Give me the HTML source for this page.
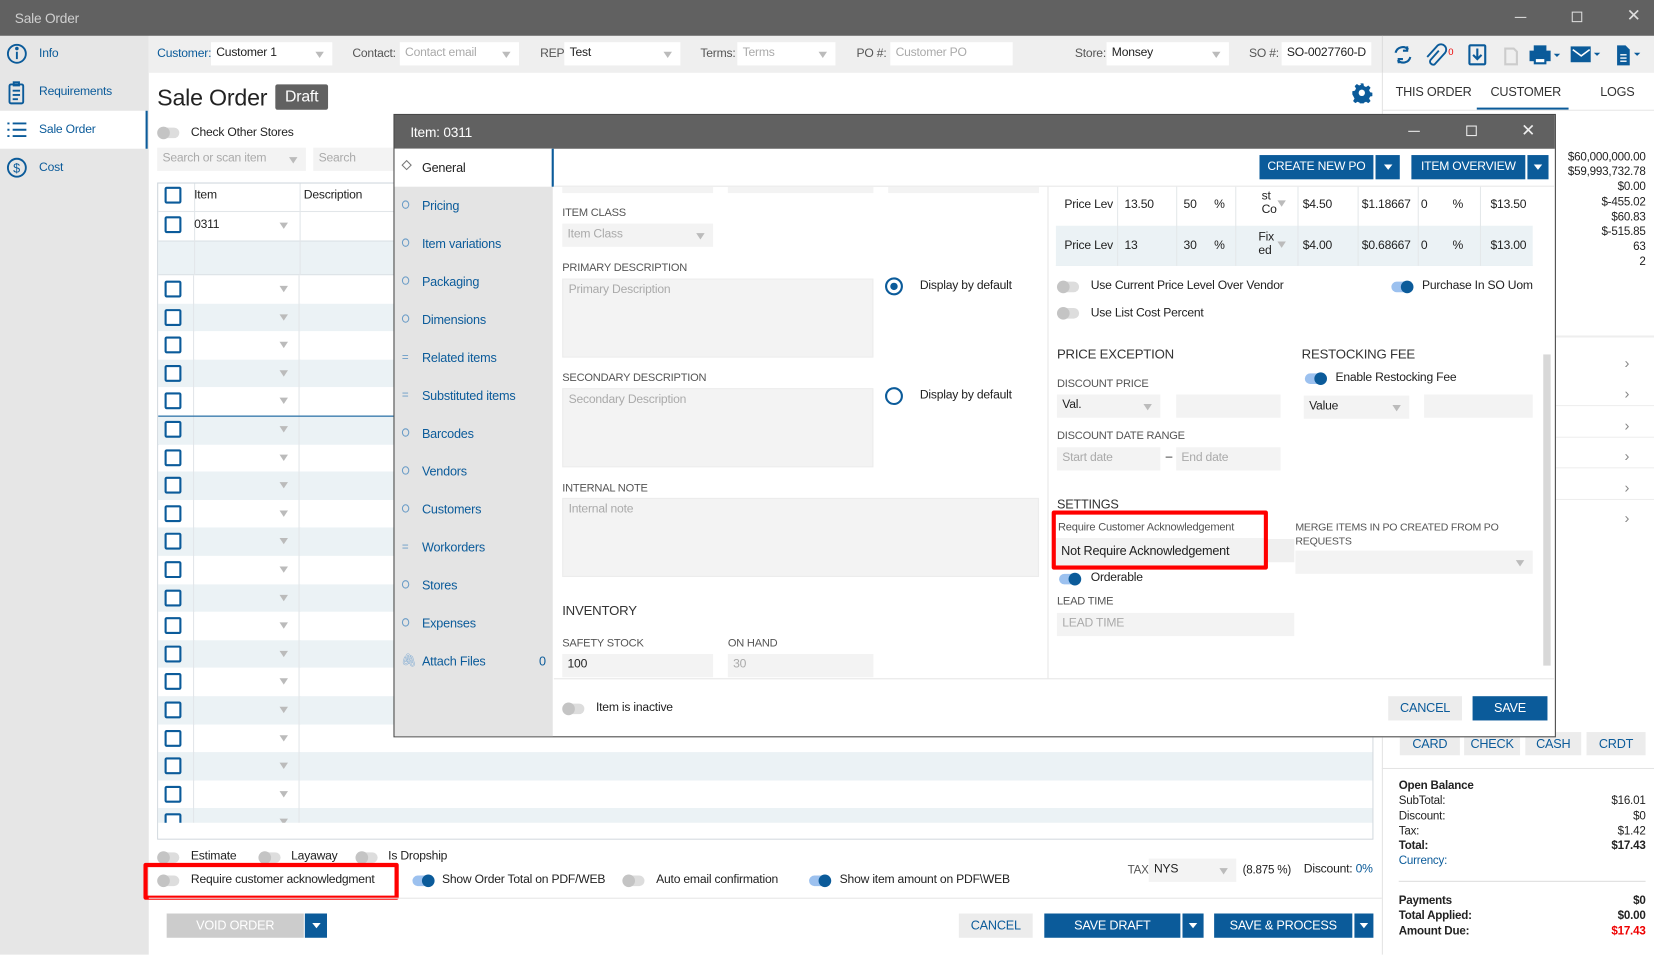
<!DOCTYPE html>
<html><head><meta charset="utf-8"><style>
*{box-sizing:border-box;margin:0;padding:0}
html,body{width:1654px;height:955px;overflow:hidden;background:#fff}
#s{position:absolute;left:0;top:0;width:1568px;height:905px;transform:scale(1.05485);transform-origin:0 0;font-family:"Liberation Sans",sans-serif;font-size:11.5px;color:#222;letter-spacing:-0.2px}
.a{position:absolute;white-space:nowrap}
.blue{color:#0b5b9a}
.inp{position:absolute;background:#fff;height:22px;padding:4px 5px;color:#222}
.g{background:#f3f3f3}
.ph{color:#aaa}
.dd::after{content:"";position:absolute;right:8px;top:9px;border:4px solid transparent;border-top:6px solid #bbb}
.tg{position:absolute;width:20px;height:10px;border-radius:5px;background:#ddd}
.tg::after{content:"";position:absolute;left:-1px;top:-1px;width:12px;height:12px;border-radius:6px;background:#c4c4c4}
.tg.on{background:#9cc1ef}.tg.on::after{left:9px;background:#0b5b9a}
.cb{position:absolute;width:16px;height:16px;border:2px solid #0b5b9a;border-radius:2px;background:#fff}
.lbl{position:absolute;font-size:10.5px;color:#555;white-space:nowrap}
.btn{position:absolute;background:#0b5b9a;color:#fff;text-align:center;font-size:12px;height:23px;line-height:23px}
.btn2{position:absolute;background:#ececec;color:#0b5b9a;text-align:center;font-size:12px;height:23px;line-height:23px}
.ddb{position:absolute;background:#0b5b9a;height:23px}
.ddb::after{content:"";position:absolute;left:50%;top:9px;margin-left:-4px;border:4px solid transparent;border-top:5px solid #fff}
.nav{position:absolute;left:400px;color:#0b5b9a;font-size:12px}
.nic{position:absolute;left:381px;width:7px;height:8px;border:1.5px solid #6a9cc7;border-radius:50%}
</style></head><body><div id="s">
<!-- title bar -->
<div class="a" style="left:0;top:0;width:1568px;height:34px;background:#616161"></div>
<div class="a" style="left:14px;top:10px;color:#cfcfcf;font-size:13px">Sale Order</div>
<div class="a" style="left:1436px;top:16px;width:11px;height:1px;background:#ddd"></div>
<div class="a" style="left:1490px;top:11px;width:10px;height:10px;border:1px solid #ddd"></div>
<div class="a" style="left:1542px;top:5px;color:#ddd;font-size:16px">✕</div>
<!-- sidebar -->
<div class="a" style="left:0;top:34px;width:141px;height:871px;background:#e6e6e6"></div>
<div class="a" style="left:0;top:105px;width:140px;height:36px;background:#fff;border-right:2px solid #0b5b9a"></div>
<svg class="a" style="left:5px;top:40px" width="22" height="140" viewBox="0 0 22 140" fill="none" stroke="#0b5b9a" stroke-width="1.8">
<circle cx="11" cy="11" r="8.5"/><line x1="11" y1="9" x2="11" y2="16"/><circle cx="11" cy="6" r=".8" fill="#0b5b9a"/>
<rect x="4" y="40" width="13" height="18" rx="1.5"/><rect x="8" y="38" width="5" height="3"/><line x1="7" y1="46" x2="14" y2="46"/><line x1="7" y1="50" x2="14" y2="50"/><line x1="7" y1="54" x2="12" y2="54"/>
<line x1="2" y1="77" x2="4" y2="77"/><line x1="7" y1="77" x2="20" y2="77"/><line x1="2" y1="83" x2="4" y2="83"/><line x1="7" y1="83" x2="20" y2="83"/><line x1="2" y1="89" x2="4" y2="89"/><line x1="7" y1="89" x2="20" y2="89"/>
<circle cx="11" cy="119" r="8.5"/><text x="7.5" y="123.5" font-size="12" fill="#0b5b9a" stroke="none" font-family="Liberation Sans">$</text>
</svg>
<div class="a blue" style="left:37px;top:45px">Info</div>
<div class="a blue" style="left:37px;top:81px">Requirements</div>
<div class="a blue" style="left:37px;top:117px">Sale Order</div>
<div class="a blue" style="left:37px;top:153px">Cost</div>
<!-- top bar -->
<div class="a" style="left:141px;top:34px;width:1427px;height:35px;background:#efefef"></div>
<div class="a blue" style="left:149px;top:45px">Customer:</div><div class="inp dd" style="left:200px;top:40px;width:115px">Customer 1</div>
<div class="a" style="left:334px;top:45px;color:#555">Contact:</div><div class="inp dd ph" style="left:379px;top:40px;width:113px">Contact email</div>
<div class="a" style="left:512px;top:45px;color:#555">REP:</div><div class="inp dd" style="left:535px;top:40px;width:110px">Test</div>
<div class="a" style="left:664px;top:45px;color:#555">Terms:</div><div class="inp dd ph" style="left:699px;top:40px;width:93px">Terms</div>
<div class="a" style="left:812px;top:45px;color:#555">PO #:</div><div class="inp ph" style="left:844px;top:40px;width:116px">Customer PO</div>
<div class="a" style="left:1019px;top:45px;color:#555">Store:</div><div class="inp dd" style="left:1049px;top:40px;width:116px">Monsey</div>
<div class="a" style="left:1184px;top:45px;color:#555">SO #:</div><div class="inp" style="left:1215px;top:40px;width:85px">SO-0027760-D</div>
<div class="a" style="left:1310px;top:34px;width:1px;height:35px;background:#ddd"></div>
<svg class="a" style="left:1318px;top:40px" width="250" height="24" viewBox="0 0 250 24" fill="none" stroke="#0b5b9a" stroke-width="2">
<path d="M5 10a7 7 0 0 1 12-3M19 14a7 7 0 0 1-12 3"/><path d="M16 4v4h-4M8 20v-4h4"/>
<path d="M46 8l-8 9a3 3 0 0 0 4 4l10-11a5 5 0 0 0-7-7L35 14" stroke-width="1.8"/>
<text x="55" y="12" font-size="9" fill="#e00" stroke="none" font-family="Liberation Sans">0</text>
<rect x="75" y="3" width="15" height="18" rx="1"/><path d="M82.5 6v10M78.5 12l4 4 4-4"/>
<path d="M109 6h8l3 3v12h-11z" stroke="#ccc"/>
<rect x="133" y="9" width="18" height="8" fill="#0b5b9a"/><rect x="137" y="4" width="10" height="5" fill="#0b5b9a"/><rect x="137" y="15" width="10" height="5" fill="#fff"/>
<path d="M155 11l3 3 3-3" fill="#0b5b9a" stroke="none"/>
<rect x="172" y="5" width="17" height="13" fill="#0b5b9a"/><path d="M173 7l8 6 8-6" stroke="#fff" stroke-width="1.5"/><path d="M193 10l6 0-3 3z" fill="#0b5b9a" stroke="none"/>
<path d="M215 3h8l4 4v15h-12z" fill="#0b5b9a" stroke="none"/><path d="M218 12h6M218 15h6M218 18h6" stroke="#fff" stroke-width="1.3"/><path d="M231 10l6 0-3 3z" fill="#0b5b9a" stroke="none"/>
</svg>
<!-- right panel tabs -->
<div class="a" style="left:1310px;top:69px;width:1px;height:836px;background:#e4e4e4"></div>
<div class="a" style="left:1323px;top:80px;font-size:12px;color:#333">THIS ORDER</div>
<div class="a" style="left:1413px;top:80px;font-size:12px;color:#333">CUSTOMER</div>
<div class="a" style="left:1400px;top:102px;width:87px;height:2px;background:#0b5b9a"></div>
<div class="a" style="left:1517px;top:80px;font-size:12px;color:#333">LOGS</div>
<div class="a" style="left:1310px;top:104px;width:258px;height:1px;background:#e6e6e6"></div>
<div class="a" style="left:1440px;top:142px;width:120px;text-align:right;font-size:11px;line-height:14.2px;white-space:normal">$60,000,000.00<br>$59,993,732.78<br>$0.00<br>$-455.02<br>$60.83<br>$-515.85<br>63<br>2</div>
<div class="a" style="left:1475px;top:318px;width:93px;height:2px;background:#eee"></div>
<div class="a" style="left:1540px;top:330px;color:#888;font-size:14px;line-height:29.4px;white-space:normal">›<br>›<br>›<br>›<br>›<br>›</div>
<div class="a" style="left:1475px;top:384px;width:93px;height:1px;background:#eee"></div>
<div class="a" style="left:1475px;top:414px;width:93px;height:1px;background:#eee"></div>
<div class="a" style="left:1475px;top:443px;width:93px;height:1px;background:#eee"></div>
<div class="a" style="left:1475px;top:473px;width:93px;height:1px;background:#eee"></div>
<div class="btn2" style="left:1327px;top:694px;width:57px;height:22px;line-height:22px">CARD</div>
<div class="btn2" style="left:1388px;top:694px;width:53px;height:22px;line-height:22px">CHECK</div>
<div class="btn2" style="left:1446px;top:694px;width:53px;height:22px;line-height:22px">CASH</div>
<div class="btn2" style="left:1504px;top:694px;width:56px;height:22px;line-height:22px">CRDT</div>
<div class="a" style="left:1310px;top:728px;width:258px;height:1px;background:#e4e4e4"></div>
<div class="a" style="left:1326px;top:738px;width:234px;font-size:11px;line-height:14.3px;white-space:normal">
<div style="font-weight:bold">Open Balance</div>
<div>SubTotal:<span style="float:right">$16.01</span></div>
<div>Discount:<span style="float:right">$0</span></div>
<div>Tax:<span style="float:right">$1.42</span></div>
<div style="font-weight:bold">Total:<span style="float:right">$17.43</span></div>
<div class="blue">Currency:</div>
</div>
<div class="a" style="left:1326px;top:835px;width:234px;height:1px;background:#ddd"></div>
<div class="a" style="left:1326px;top:847px;width:234px;font-size:11px;line-height:14.3px;font-weight:bold;white-space:normal">
<div>Payments<span style="float:right">$0</span></div>
<div>Total Applied:<span style="float:right">$0.00</span></div>
<div>Amount Due:<span style="float:right;color:#e00">$17.43</span></div>
</div>
<!-- main -->
<div class="a" style="left:149px;top:80px;font-size:22px;color:#222">Sale Order</div>
<div class="a" style="left:261px;top:80px;width:50px;height:24px;background:#616161;color:#fff;font-size:15px;text-align:center;line-height:24px;border-radius:2px">Draft</div>
<svg class="a" style="left:1281px;top:78px" width="20" height="20" viewBox="0 0 20 20"><path fill="#0b5b9a" d="M8.5 1h3l.5 2.5 2 1 2.2-1.4 2.1 2.1-1.4 2.2 1 2 2.6.6v3l-2.6.5-1 2 1.4 2.2-2.1 2.1-2.2-1.4-2 1-.5 2.6h-3l-.5-2.6-2-1-2.2 1.4-2.1-2.1 1.4-2.2-1-2L1 11.5v-3l2.5-.6 1-2L3.2 3.7l2.1-2.1 2.2 1.4 2-1z"/><circle cx="10" cy="10" r="3" fill="#fff"/></svg>
<div class="tg" style="left:150px;top:121px"></div>
<div class="a" style="left:181px;top:120px">Check Other Stores</div>
<div class="inp g dd ph" style="left:149px;top:140px;width:141px">Search or scan item</div>
<div class="inp g ph" style="left:297px;top:140px;width:90px">Search</div>
<!-- grid -->
<div class="a" style="left:149px;top:173px;width:1153px;height:623px;border:1px solid #cfd6dc;background:#fff;overflow:hidden">
<div class="a" style="left:0;top:54px;width:1153px;height:33px;background:#ebf2f5;border-top:1px solid #d9e0e4;border-bottom:1px solid #d9e0e4"></div>
<div class="a" style="left:34px;top:0;width:1px;height:610px;background:#e2e6e9"></div>
<div class="a" style="left:134px;top:0;width:1px;height:610px;background:#e2e6e9"></div>
<div class="a" style="left:0;top:26px;width:1153px;height:1px;background:#e2e6e9"></div>
<div id="rows"></div>
<div class="a" style="left:0;top:220px;width:1153px;height:1px;background:#0b5b9a"></div>
<div class="a" style="left:0;top:247px;width:400px;height:1px;background:#0b5b9a"></div>
</div>
<div class="cb" style="left:156px;top:177px"></div>
<div class="a" style="left:184px;top:179px">Item</div>
<div class="a" style="left:288px;top:179px">Description</div>
<div class="cb" style="left:156px;top:205px"></div>
<div class="a" style="left:184px;top:207px">0311</div>
<div class="a" style="left:265px;top:211px;border:4px solid transparent;border-top:6px solid #bbb"></div>
<script>
var h='';for(var i=0;i<20;i++){var y=261+i*26.6;var bg=(i%2==1)?'#ebf2f5':'#fff';if(y<780){h+='<div class="a" style="left:150px;top:'+(y)+'px;width:1151px;height:26.6px;background:'+bg+'"></div>';}}
document.write(h);
h='';for(var i=0;i<20;i++){var y=261+i*26.6;if(y<776){h+='<div class="cb" style="left:156px;top:'+(y+5)+'px"></div><div class="a" style="left:265px;top:'+(y+10)+'px;border:4px solid transparent;border-top:6px solid #bbb"></div>';}}
h+='<div class="a" style="left:183px;top:261px;width:1px;height:520px;background:#e2e6e9"></div><div class="a" style="left:283px;top:261px;width:1px;height:520px;background:#e2e6e9"></div>';
h+='<div class="a" style="left:150px;top:394px;width:1151px;height:1px;background:#0b5b9a"></div>';
document.write(h);
</script>
<div class="a" style="left:150px;top:780px;width:1151px;height:15px;background:#fff"></div>
<!-- bottom toggles -->
<div class="tg" style="left:150px;top:808px"></div><div class="a" style="left:181px;top:806px">Estimate</div>
<div class="tg" style="left:246px;top:808px"></div><div class="a" style="left:276px;top:806px">Layaway</div>
<div class="tg" style="left:338px;top:808px"></div><div class="a" style="left:368px;top:806px">Is Dropship</div>
<div class="a" style="left:136px;top:818px;width:242px;height:35px;border:4px solid #f00;border-radius:2px"></div>
<div class="tg" style="left:150px;top:830px"></div><div class="a" style="left:181px;top:828px">Require customer acknowledgment</div>
<div class="tg on" style="left:391px;top:830px"></div><div class="a" style="left:419px;top:828px">Show Order Total on PDF/WEB</div>
<div class="tg" style="left:591px;top:830px"></div><div class="a" style="left:622px;top:828px">Auto email confirmation</div>
<div class="tg on" style="left:767px;top:830px"></div><div class="a" style="left:796px;top:828px">Show item amount on PDF\WEB</div>
<div class="a" style="left:1069px;top:819px;color:#555;font-size:11px">TAX</div>
<div class="inp g dd" style="left:1089px;top:814px;width:83px">NYS</div>
<div class="a" style="left:1178px;top:819px;font-size:11px">(8.875 %)</div>
<div class="a" style="left:1236px;top:818px">Discount: <span class="blue">0%</span></div>
<div class="a" style="left:141px;top:851px;width:1169px;height:1px;background:#e6e6e6"></div>
<div class="btn" style="left:158px;top:866px;width:130px;background:#ccc;color:#fff">VOID ORDER</div><div class="ddb" style="left:289px;top:866px;width:21px"></div>
<div class="btn2" style="left:909px;top:866px;width:70px">CANCEL</div>
<div class="btn" style="left:990px;top:866px;width:129px">SAVE DRAFT</div><div class="ddb" style="left:1121px;top:866px;width:20px"></div>
<div class="btn" style="left:1151px;top:866px;width:131px">SAVE &amp; PROCESS</div><div class="ddb" style="left:1284px;top:866px;width:18px"></div>

<!-- MODAL -->
<div class="a" style="left:373px;top:108px;width:1102px;height:591px;border:1px solid #444;background:#fff"></div>
<div class="a" style="left:374px;top:109px;width:1100px;height:32px;background:#616161"></div>
<div class="a" style="left:389px;top:118px;color:#fff;font-size:13px">Item: 0311</div>
<div class="a" style="left:1335px;top:124px;width:11px;height:1px;background:#eee"></div>
<div class="a" style="left:1390px;top:119px;width:10px;height:10px;border:1px solid #eee"></div>
<div class="a" style="left:1442px;top:114px;color:#eee;font-size:16px">✕</div>
<div class="a" style="left:374px;top:141px;width:150px;height:557px;background:#e4e4e4"></div>
<div class="a" style="left:374px;top:141px;width:149px;height:36px;background:#fff"></div>
<div class="a" style="left:523px;top:141px;width:2px;height:36px;background:#0b5b9a"></div>
<div class="a" style="left:382px;top:153px;width:7px;height:7px;border:1px solid #777;transform:rotate(45deg)"></div>
<div class="a" style="left:400px;top:152px;font-size:12px">General</div>
<div class="nic" style="top:190px"></div><div class="nav" style="top:188px">Pricing</div>
<div class="nic" style="top:226px"></div><div class="nav" style="top:224px">Item variations</div>
<div class="nic" style="top:262px"></div><div class="nav" style="top:260px">Packaging</div>
<div class="nic" style="top:298px"></div><div class="nav" style="top:296px">Dimensions</div>
<div class="a" style="left:381px;top:333px;color:#6a9cc7;font-size:11px">=</div><div class="nav" style="top:332px">Related items</div>
<div class="a" style="left:381px;top:369px;color:#6a9cc7;font-size:11px">=</div><div class="nav" style="top:368px">Substituted items</div>
<div class="nic" style="top:406px"></div><div class="nav" style="top:404px">Barcodes</div>
<div class="nic" style="top:442px"></div><div class="nav" style="top:440px">Vendors</div>
<div class="nic" style="top:478px"></div><div class="nav" style="top:476px">Customers</div>
<div class="a" style="left:381px;top:513px;color:#6a9cc7;font-size:11px">=</div><div class="nav" style="top:512px">Workorders</div>
<div class="nic" style="top:550px"></div><div class="nav" style="top:548px">Stores</div>
<div class="nic" style="top:586px"></div><div class="nav" style="top:584px">Expenses</div>
<div class="a" style="left:380px;top:619px;color:#8ab0d4;font-size:12px">🖇</div><div class="nav" style="top:620px">Attach Files</div>
<div class="a blue" style="left:511px;top:620px;font-size:12px">0</div>
<!-- modal toolbar -->
<div class="btn" style="left:1194px;top:147px;width:108px;font-size:11.5px">CREATE NEW PO</div><div class="ddb" style="left:1304px;top:147px;width:23px"></div>
<div class="btn" style="left:1338px;top:147px;width:108px;font-size:11.5px">ITEM OVERVIEW</div><div class="ddb" style="left:1448px;top:147px;width:20px"></div>
<div class="a" style="left:525px;top:176px;width:949px;height:1px;background:#e8e8e8"></div>
<div class="a" style="left:533px;top:177px;width:143px;height:6px;background:#f3f3f3"></div>
<div class="a" style="left:690px;top:177px;width:138px;height:6px;background:#f3f3f3"></div>
<div class="a" style="left:842px;top:177px;width:143px;height:6px;background:#f3f3f3"></div>
<!-- col1 -->
<div class="lbl" style="left:533px;top:196px">ITEM CLASS</div>
<div class="inp g dd ph" style="left:533px;top:212px;width:143px">Item Class</div>
<div class="lbl" style="left:533px;top:248px">PRIMARY DESCRIPTION</div>
<div class="inp g ph" style="left:533px;top:264px;width:295px;height:75px;border:1px solid #ececec">Primary Description</div>
<div class="a" style="left:839px;top:263px;width:17px;height:17px;border:2px solid #0b5b9a;border-radius:50%"><div style="margin:3px;width:7px;height:7px;border-radius:50%;background:#0b5b9a"></div></div>
<div class="a" style="left:872px;top:265px">Display by default</div>
<div class="lbl" style="left:533px;top:352px">SECONDARY DESCRIPTION</div>
<div class="inp g ph" style="left:533px;top:368px;width:295px;height:75px;border:1px solid #ececec">Secondary Description</div>
<div class="a" style="left:839px;top:367px;width:17px;height:17px;border:2px solid #0b5b9a;border-radius:50%"></div>
<div class="a" style="left:872px;top:369px">Display by default</div>
<div class="lbl" style="left:533px;top:457px">INTERNAL NOTE</div>
<div class="inp g ph" style="left:533px;top:472px;width:452px;height:75px;border:1px solid #ececec">Internal note</div>
<div class="a" style="left:533px;top:572px;font-size:12.5px;color:#333">INVENTORY</div>
<div class="lbl" style="left:533px;top:604px">SAFETY STOCK</div>
<div class="lbl" style="left:690px;top:604px">ON HAND</div>
<div class="inp g" style="left:533px;top:620px;width:143px">100</div>
<div class="inp g ph" style="left:690px;top:620px;width:138px">30</div>
<div class="a" style="left:993px;top:177px;width:1px;height:466px;background:#e6e6e6"></div>
<div class="a" style="left:525px;top:643px;width:949px;height:1px;background:#e6e6e6"></div>
<div class="tg" style="left:534px;top:667px"></div><div class="a" style="left:565px;top:665px">Item is inactive</div>
<div class="btn2" style="left:1316px;top:660px;width:70px">CANCEL</div>
<div class="btn" style="left:1396px;top:660px;width:71px">SAVE</div>
<!-- price table -->
<div class="a" style="left:1001px;top:177px;width:452px;height:75px;border-bottom:1px solid #dde3e6;font-size:11.5px">
<div class="a" style="left:0;top:37px;width:452px;height:38px;background:#ebf2f5"></div>
<div class="a" style="left:8px;top:11px">Price Lev</div><div class="a" style="left:65px;top:11px">13.50</div><div class="a" style="left:121px;top:11px">50</div><div class="a" style="left:150px;top:11px">%</div>
<div class="a" style="left:195px;top:3px;line-height:13px">st<br>Co</div><div class="a" style="left:210px;top:13px;border:4px solid transparent;border-top:6px solid #bbb"></div>
<div class="a" style="left:234px;top:11px">$4.50</div><div class="a" style="left:290px;top:11px">$1.18667</div><div class="a" style="left:346px;top:11px">0</div><div class="a" style="left:376px;top:11px">%</div><div class="a" style="left:412px;top:11px">$13.50</div>
<div class="a" style="left:8px;top:50px">Price Lev</div><div class="a" style="left:65px;top:50px">13</div><div class="a" style="left:121px;top:50px">30</div><div class="a" style="left:150px;top:50px">%</div>
<div class="a" style="left:192px;top:42px;line-height:13px">Fix<br>ed</div><div class="a" style="left:210px;top:52px;border:4px solid transparent;border-top:6px solid #bbb"></div>
<div class="a" style="left:234px;top:50px">$4.00</div><div class="a" style="left:290px;top:50px">$0.68667</div><div class="a" style="left:346px;top:50px">0</div><div class="a" style="left:376px;top:50px">%</div><div class="a" style="left:412px;top:50px">$13.00</div>
<div class="a" style="left:58px;top:0;width:1px;height:75px;background:#e4e8ea"></div>
<div class="a" style="left:114px;top:0;width:1px;height:75px;background:#e4e8ea"></div>
<div class="a" style="left:170px;top:0;width:1px;height:75px;background:#e4e8ea"></div>
<div class="a" style="left:229px;top:0;width:1px;height:75px;background:#e4e8ea"></div>
<div class="a" style="left:286px;top:0;width:1px;height:75px;background:#e4e8ea"></div>
<div class="a" style="left:343px;top:0;width:1px;height:75px;background:#e4e8ea"></div>
<div class="a" style="left:402px;top:0;width:1px;height:75px;background:#e4e8ea"></div>
</div>
<div class="tg" style="left:1003px;top:267px"></div><div class="a" style="left:1034px;top:265px">Use Current Price Level Over Vendor</div>
<div class="tg on" style="left:1319px;top:267px"></div><div class="a" style="left:1348px;top:265px">Purchase In SO Uom</div>
<div class="tg" style="left:1003px;top:292px"></div><div class="a" style="left:1034px;top:291px">Use List Cost Percent</div>
<div class="a" style="left:1002px;top:329px;font-size:12.5px;color:#333">PRICE EXCEPTION</div>
<div class="a" style="left:1234px;top:329px;font-size:12.5px;color:#333">RESTOCKING FEE</div>
<div class="lbl" style="left:1002px;top:358px">DISCOUNT PRICE</div>
<div class="tg on" style="left:1237px;top:354px"></div><div class="a" style="left:1266px;top:352px">Enable Restocking Fee</div>
<div class="inp g dd" style="left:1002px;top:374px;width:98px">Val.</div>
<div class="inp g" style="left:1115px;top:374px;width:99px"></div>
<div class="inp g dd" style="left:1236px;top:375px;width:100px">Value</div>
<div class="inp g" style="left:1350px;top:374px;width:103px"></div>
<div class="lbl" style="left:1002px;top:407px">DISCOUNT DATE RANGE</div>
<div class="inp g ph" style="left:1002px;top:424px;width:98px">Start date</div>
<div class="a" style="left:1105px;top:427px">–</div>
<div class="inp g ph" style="left:1115px;top:424px;width:99px">End date</div>
<div class="a" style="left:1002px;top:471px;font-size:12px;color:#333">SETTINGS</div>
<div class="a" style="left:1228px;top:495px;font-size:10px;color:#555;line-height:12.5px;white-space:normal;width:220px">MERGE ITEMS IN PO CREATED FROM PO REQUESTS</div>
<div class="inp g dd" style="left:1228px;top:522px;width:225px"></div>
<div class="a" style="left:1002px;top:511px;width:225px;height:22px;background:#efefef"></div>
<div class="a" style="left:997px;top:484px;width:205px;height:56px;border:4px solid #f00;border-radius:2px;background:#fff"></div>
<div class="a" style="left:1001px;top:488px;width:197px;height:22px;background:#fff"></div>
<div class="a" style="left:1001px;top:510px;width:197px;height:26px;background:#f2f2f2"></div>
<div class="a" style="left:1003px;top:494px;font-size:10.5px;color:#555">Require Customer Acknowledgement</div>
<div class="a" style="left:1006px;top:515px;font-size:12px">Not Require Acknowledgement</div>
<div class="tg on" style="left:1004px;top:544px"></div><div class="a" style="left:1034px;top:542px">Orderable</div>
<div class="lbl" style="left:1002px;top:564px">LEAD TIME</div>
<div class="inp g ph" style="left:1002px;top:581px;width:225px">LEAD TIME</div>
<div class="a" style="left:1463px;top:336px;width:7px;height:295px;background:#d8d8d8"></div>
</div></body></html>
